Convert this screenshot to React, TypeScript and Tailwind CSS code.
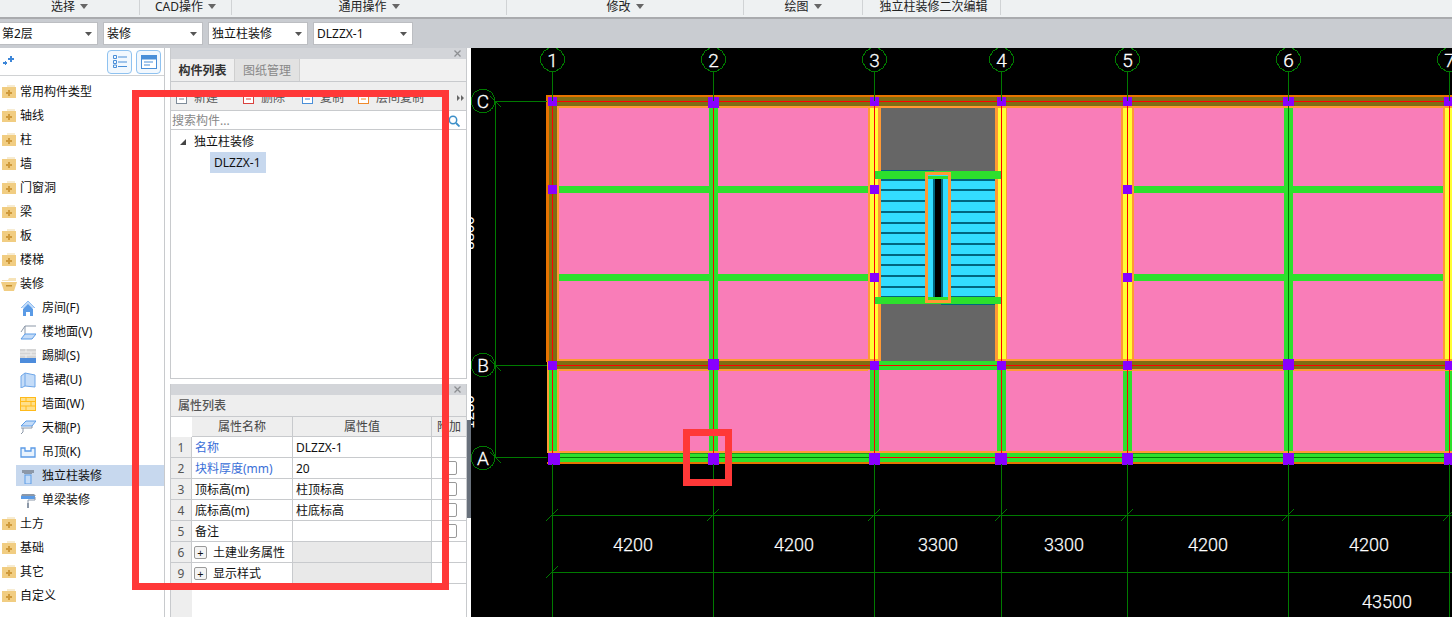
import React from "react";

const F = "font-['Noto_Sans','Noto_Sans_CJK_SC',sans-serif]";

function Folder({ open }: { open?: boolean }) {
  return (
    <svg width="16" height="14" viewBox="0 0 16 14" className="shrink-0">
      {open ? (
        <>
          <path d="M1 3h6l1-2h7v3H1z" fill="#f6e3b8" />
          <path d="M0 5h16l-3 9H3z" fill="#f1cd82" />
          <rect x="5" y="8" width="6" height="1.5" fill="#c58f2c" />
        </>
      ) : (
        <>
          <path d="M6 0h8v3H6z" fill="#f7ecd2" />
          <rect x="1" y="2" width="14" height="11" fill="#f1cd82" />
          <path d="M7 5h2v2h2v2H9v2H7V9H5V7h2z" fill="#cf9a3c" />
        </>
      )}
    </svg>
  );
}

function SubIcon({ k }: { k: number }) {
  const b = "#5b9be6";
  const l = "#c4dcf8";
  const g = "#8c98a8";
  const c: Record<number, React.ReactNode> = {
    0: (
      <>
        <path d="M1 8 8 1l7 7" fill={l} stroke="#8fbdf2" strokeWidth="1" />
        <path d="M3 9 8 4l5 5v7h-3v-4H6v4H3z" fill={b} />
      </>
    ),
    1: (
      <>
        <path d="M1 8 5 2h11M5 2v8" fill="none" stroke={g} strokeWidth="1" />
        <path d="M5 10h11l-4 5H1z" fill={l} stroke={b} strokeWidth="1" />
      </>
    ),
    2: (
      <>
        <rect x="0" y="1" width="16" height="9" fill="#d4d4d4" />
        <path d="M0 4h16M0 7h16M6 1v3M11 4v3M6 7v3" stroke="#f0f0f0" strokeWidth="1" />
        <rect x="0" y="10" width="16" height="5" fill="#4d8cdc" />
      </>
    ),
    3: (
      <>
        <path d="M1 4 5 1l10 2v12l-10-1-4 2z" fill={l} stroke="#6ea6e8" strokeWidth="1" />
        <path d="M5 1v13" stroke="#6ea6e8" strokeWidth="1" />
      </>
    ),
    4: (
      <>
        <rect x="0.5" y="1.5" width="15" height="13" fill="#ffe08a" stroke="#ffba1a" strokeWidth="1" />
        <path d="M0 5.5h16M0 10h16M6 1.500v4M11 5.500v4.500M6 10v4" stroke="#ffba1a" strokeWidth="1" />
      </>
    ),
    5: (
      <>
        <path d="M1 6 6 1h10l-4 5z" fill={l} stroke={b} strokeWidth="1" />
        <path d="M1 8h11M3 8v4M1 14l2-2M12 6v2" fill="none" stroke={g} strokeWidth="1" />
      </>
    ),
    6: (
      <path d="M1 4h4v3h6V4h4v9H1z" fill="#e8f2fd" stroke={b} strokeWidth="1.300" />
    ),
    7: (
      <>
        <path d="M2 2h12v3h-2v1H4V5H2z" fill={g} />
        <rect x="5" y="7" width="6" height="9" fill={l} stroke={b} strokeWidth="1" />
      </>
    ),
    8: (
      <>
        <path d="M2 2h12l2 2H1z" fill={g} />
        <rect x="1" y="4" width="14" height="3" fill={b} />
        <path d="M15 5v3H8v3" fill="none" stroke={g} strokeWidth="1" />
        <rect x="7" y="11" width="2" height="5" fill={g} />
      </>
    ),
  };
  return (
    <svg width="16" height="16" viewBox="0 0 16 16" className="shrink-0">
      {c[k]}
    </svg>
  );
}

const before = ["常用构件类型", "轴线", "柱", "墙", "门窗洞", "梁", "板", "楼梯"];
const subs = ["房间(F)", "楼地面(V)", "踢脚(S)", "墙裙(U)", "墙面(W)", "天棚(P)", "吊顶(K)", "独立柱装修", "单梁装修"];
const after = ["土方", "基础", "其它", "自定义"];

function LeftPanel() {
  const Row = ({ t, open }: { t: string; open?: boolean }) => (
    <div className="h-6 flex items-center gap-[3px] pl-[1px]">
      <Folder open={open} />
      <span>{t}</span>
    </div>
  );
  return (
    <div className="w-[165px] shrink-0 bg-white border-r border-[#c8cacd] text-[12px] text-[#111]">
      <div className="h-[28px] border-b border-[#d0d2d4] flex items-center pl-[2px] pr-[3px] justify-between">
        <svg width="13" height="13" viewBox="0 0 13 13">
          <path d="M8 1h2v2h2v2h-2v2H8V5H6V3h2zM1 7h2V6h1v1h1v2H4v1H3V9H1z" fill="#3d86d8" />
        </svg>
        <div className="flex gap-[4px]">
          <div className="w-[25px] h-[24px] rounded-[4px] border border-[#8fc2f0] bg-[#f2f8fe] flex items-center justify-center">
            <svg width="14" height="13" viewBox="0 0 14 13">
              <path d="M0.500 0.500h3v3h-3zM0.500 5.500h3v3h-3zM0.500 10h3v2.500h-3z" fill="none" stroke="#4a8fd8" />
              <path d="M5 2h9M5 7h9M5 11.500h9" stroke="#4a8fd8" />
            </svg>
          </div>
          <div className="w-[25px] h-[24px] rounded-[4px] border border-[#8fc2f0] bg-[#f2f8fe] flex items-center justify-center">
            <svg width="16" height="14" viewBox="0 0 16 14">
              <rect x="0.500" y="0.500" width="15" height="13" fill="#fff" stroke="#4a8fd8" />
              <rect x="0.500" y="0.500" width="15" height="4" fill="#4a8fd8" />
              <path d="M3 7h9M3 10h6" stroke="#4a8fd8" />
            </svg>
          </div>
        </div>
      </div>
      <div className="pt-[4px]">
        {before.map((t) => (
          <Row key={t} t={t} />
        ))}
        <Row t="装修" open />
        {subs.map((t, i) => (
          <div key={t} className={"ml-[16px] flex items-center gap-[6px] pl-[4px] " + (i === 7 ? "bg-[#c7d8ee] h-[21px] mt-[1px] mb-[2px]" : "h-6")}>
            <SubIcon k={i} />
            <span>{t}</span>
          </div>
        ))}
        {after.map((t) => (
          <Row key={t} t={t} />
        ))}
      </div>
    </div>
  );
}

function X() {
  return (
    <svg width="7" height="7" viewBox="0 0 7 7">
      <path d="M0.500 0.500l6 6M6.500 0.500l-6 6" stroke="#8d8f92" strokeWidth="1.300" />
    </svg>
  );
}

function TopPanel() {
  const tool = ["新建", "删除", "复制", "层间复制"];
  const colors = ["#7f8c9a", "#d9433f", "#4a8fd8", "#f08a2c"];
  const widths = ["w-[67px]", "w-[59px]", "w-[56px]", "w-auto"];
  return (
    <div className="h-[331px] flex flex-col border-x border-b border-[#c8cacd] bg-white">
      <div className="h-[11px] bg-[#d3d5d9] flex items-center justify-end pr-[5px]">
        <X />
      </div>
      <div className="h-[23px] flex border-b border-[#c8cacd] bg-[#f1f1f1] text-[12px]">
        <div className="w-[63px] pt-[1px] flex items-center justify-center font-bold text-[#333] bg-[#efefef]">构件列表</div>
        <div className="w-[66px] pt-[1px] flex items-center justify-center text-[#888] bg-[#e2e2e2] border-x border-[#cfcfcf]">图纸管理</div>
      </div>
      <div className="h-[29px] flex items-center bg-[#eeeeee] border-b border-[#c8cacd] pl-[5px] pt-[3px] text-[12px] text-[#555] relative">
        {tool.map((t, i) => (
          <div key={t} className={"flex items-center gap-[5px] " + widths[i]}>
            <svg width="13" height="13" viewBox="0 0 13 13">
              <rect x="0.500" y="0.500" width="10" height="12" fill="#fff" stroke={colors[i]} />
              <path d="M3 5h5M3 8h5" stroke={colors[i]} />
            </svg>
            <span>{t}</span>
          </div>
        ))}
        <svg width="7" height="6" viewBox="0 0 7 6" className="absolute right-[2px] top-[13px]">
          <path d="M0 0l3 3-3 3zM4 0l3 3-3 3z" fill="#666" />
        </svg>
      </div>
      <div className="h-[19px] flex items-center justify-between border-b border-[#c8cacd] pl-[1px] pr-[6px] pt-[1px] text-[12px] text-[#888]">
        <span>搜索构件...</span>
        <svg width="12" height="12" viewBox="0 0 12 12">
          <circle cx="5" cy="5" r="3.700" fill="none" stroke="#3c8fc8" strokeWidth="1.500" />
          <path d="M8 8l3.500 3.500" stroke="#3c8fc8" strokeWidth="1.800" />
        </svg>
      </div>
      <div className="text-[12px] text-[#111] pt-[2px]">
        <div className="h-[20px] flex items-center pl-[9px] gap-[8px]">
          <svg width="6" height="6" viewBox="0 0 6 6">
            <path d="M6 0v6H0z" fill="#444" />
          </svg>
          <span>独立柱装修</span>
        </div>
        <div className="ml-[39px] w-[56px] h-[21px] bg-[#c7d8ee] flex items-center pl-[4px]">DLZZX-1</div>
      </div>
    </div>
  );
}

const rows = [
  { n: 1, a: "名称", v: "DLZZX-1", blue: true, check: false },
  { n: 2, a: "块料厚度(mm)", v: "20", blue: true, check: true },
  { n: 3, a: "顶标高(m)", v: "柱顶标高", check: true },
  { n: 4, a: "底标高(m)", v: "柱底标高", check: true },
  { n: 5, a: "备注", v: "", check: true },
];

function PropPanel() {
  const line = "border-r border-b border-[#c8cacd] pt-[1px]";
  return (
    <div className="flex-1 flex flex-col border-x border-[#c8cacd] bg-white text-[12px] text-[#111]">
      <div className="h-[11px] bg-[#d3d5d9] flex items-center justify-end pr-[5px]">
        <X />
      </div>
      <div className="h-[22px] bg-[#eeeeee] border-b border-[#c8cacd] flex items-center pl-[7px] pt-[1px] text-[#555] font-medium">属性列表</div>
      <div className="flex-1 grid grid-cols-[21px_101px_139px_1fr] grid-rows-[20px_repeat(7,21px)_1fr]">
        <div className="bg-white" />
        <div className={"bg-[#eeeeee] flex items-center justify-center text-[#444] " + line}>属性名称</div>
        <div className={"bg-[#eeeeee] flex items-center justify-center text-[#444] " + line}>属性值</div>
        <div className="bg-[#eeeeee] border-b border-[#c8cacd] flex items-center justify-center text-[#444] pt-[1px]">附加</div>
        {rows.map((r) => (
          <React.Fragment key={r.n}>
            <div className={"bg-[#eeeeee] flex items-center justify-center text-[#555] " + line}>{r.n}</div>
            <div className={"flex items-center pl-[3px] " + line + (r.blue ? " text-[#3a6fd8]" : "")}>{r.a}</div>
            <div className={"flex items-center pl-[3px] " + line}>{r.v}</div>
            <div className="flex items-center justify-center border-b border-[#c8cacd] pl-[3px]">
              {r.check && <div className="w-[13px] h-[14px] rounded-[2px] border border-[#999] bg-white" />}
            </div>
          </React.Fragment>
        ))}
        {[
          [6, "土建业务属性"],
          [9, "显示样式"],
        ].map(([n, t]) => (
          <React.Fragment key={n}>
            <div className={"bg-[#eeeeee] flex items-center justify-center text-[#555] " + line}>{n}</div>
            <div className={"flex items-center pl-[2px] gap-[6px] " + line}>
              <span className="w-[13px] h-[13px] border border-[#999] rounded-[2px] flex items-center justify-center leading-none text-[11px] bg-[#f4f4f4]">+</span>
              <span>{t}</span>
            </div>
            <div className={"bg-[#e9e9e9] " + line} />
            <div className="border-b border-[#c8cacd]" />
          </React.Fragment>
        ))}
        <div className="bg-[#eeeeee]" />
      </div>
    </div>
  );
}

const AX = [552, 713, 874, 1001, 1127, 1288, 1449];
const PINK = "#f97db8";
const GREEN = "#2de02d";
const YEL = "#ffff33";
const LT = "#ff9933";
const OR = "#e67300";
const OL = "#7f6d12";
const PUR = "#8800ff";
const AXC = "#007a00";
const RED = "#ff0000";
const NUM = "Roboto, Liberation Sans, sans-serif";

function R({ x, y, x2, y2, c }: { x: number; y: number; x2: number; y2: number; c: string }) {
  return <rect x={x} y={y} width={x2 - x} height={y2 - y} fill={c} />;
}

function Bubble({ x, y, t }: { x: number; y: number; t: string }) {
  const pts = Array.from({ length: 12 }, (_, i) => {
    const a = (i * Math.PI) / 6 + Math.PI / 12;
    return `${(x + 12 * Math.cos(a)).toFixed(1)},${(y + 12 * Math.sin(a)).toFixed(1)}`;
  }).join(" ");
  return (
    <g>
      <polygon points={pts} fill="none" stroke={AXC} strokeWidth="1" shapeRendering="crispEdges" />
      <text x={x} y={y + 7} fontSize="19" fontWeight="300" fill="#fff" stroke="#fff" strokeWidth="0.3" textAnchor="middle" fontFamily={NUM}>
        {t}
      </text>
    </g>
  );
}

function Canvas() {
  const stair = [179, 189, 200, 211, 222, 232, 243, 254, 264, 275, 286, 296];
  const dims: [number, string][] = [
    [633, "4200"],
    [794, "4200"],
    [938, "3300"],
    [1064, "3300"],
    [1208, "4200"],
    [1369, "4200"],
  ];
  const pur: [number, number, number, number][] = [
    [548, 97, 557, 106],
    [708, 97, 719, 108],
    [870, 97, 879, 106],
    [997, 97, 1006, 106],
    [1123, 97, 1132, 106],
    [1283, 97, 1294, 106],
    [1444, 97, 1452, 106],
    [548, 185, 557, 194],
    [870, 185, 879, 194],
    [1123, 185, 1132, 194],
    [870, 273, 879, 282],
    [1123, 273, 1132, 282],
    [548, 361, 557, 370],
    [708, 359, 719, 370],
    [870, 361, 879, 370],
    [997, 361, 1006, 370],
    [1123, 361, 1132, 370],
    [1283, 359, 1294, 370],
    [1445, 361, 1452, 370],
    [548, 453, 560, 465],
    [708, 453, 719, 465],
    [869, 453, 880, 465],
    [995, 453, 1007, 465],
    [1122, 453, 1133, 465],
    [1283, 453, 1294, 465],
    [1444, 453, 1452, 465],
  ];
  return (
    <svg width="981" height="569" viewBox="471 48 981 569" className="block bg-black" shapeRendering="crispEdges">
      <R x={559} y={108} x2={1452} y2={451} c={PINK} />
      {/* stair well */}
      <R x={881} y={108} x2={995} y2={361} c="#666666" />
      <R x={881} y={179} x2={995} y2={297} c="#33ddff" />
      {stair.map((y) => (
        <g key={y}>
          <R x={881} y={y} x2={925} y2={y + 2} c="#006680" />
          <R x={951} y={y} x2={995} y2={y + 2} c="#006680" />
        </g>
      ))}
      <R x={881} y={170} x2={934} y2={171} c="#006680" />
      <R x={941} y={304} x2={995} y2={305} c="#006680" />
      {/* green horizontal beams */}
      {[186, 274].map((y) => (
        <g key={y}>
          <R x={557} y={y} x2={870} y2={y + 7} c={GREEN} />
          <R x={1130} y={y} x2={1452} y2={y + 7} c={GREEN} />
        </g>
      ))}
      {/* vertical green */}
      <R x={709} y={108} x2={718} y2={453} c={GREEN} />
      <R x={1284} y={108} x2={1293} y2={453} c={GREEN} />
      {/* yellow columns */}
      {[
        [868, 870, 878, 881],
        [995, 998, 1006, 1007],
        [1121, 1123, 1132, 1134],
        [1443, 1445, 1452, 1452],
      ].map(([a, b, c, d]) => (
        <g key={a}>
          <R x={a} y={108} x2={d} y2={359} c={LT} />
          <R x={b} y={108} x2={c} y2={359} c={YEL} />
        </g>
      ))}
      {/* stair landings over the columns */}
      <R x={875} y={171} x2={1001} y2={179} c={GREEN} />
      <R x={875} y={297} x2={1001} y2={304} c={GREEN} />
      <R x={925} y={172} x2={951} y2={303} c={LT} />
      <R x={928} y={175} x2={948} y2={300} c="#33ddff" />
      <R x={928} y={176} x2={948} y2={179} c={GREEN} />
      <R x={928} y={297} x2={948} y2={300} c={GREEN} />
      <R x={933} y={179} x2={943} y2={297} c="#006680" />
      <R x={935} y={179} x2={941} y2={297} c="#000" />
      {/* green columns below B */}
      {[
        [870, 879],
        [997, 1006],
        [1123, 1132],
        [1445, 1452],
      ].map(([a, b]) => (
        <R key={a} x={a} y={370} x2={b} y2={453} c={GREEN} />
      ))}
      {/* top band */}
      <R x={546} y={95} x2={1452} y2={97} c={OR} />
      <R x={549} y={97} x2={1452} y2={106} c={OL} />
      <R x={557} y={106} x2={1452} y2={108} c={LT} />
      {/* left band */}
      <R x={546} y={95} x2={549} y2={362} c={OR} />
      <R x={549} y={97} x2={557} y2={361} c={OL} />
      <R x={557} y={108} x2={559} y2={359} c={LT} />
      <R x={547} y={362} x2={549} y2={453} c={LT} />
      <R x={549} y={370} x2={557} y2={453} c={GREEN} />
      <R x={557} y={371} x2={559} y2={453} c={LT} />
      {/* B band */}
      <R x={557} y={359} x2={1452} y2={371} c={LT} />
      <R x={549} y={361} x2={1452} y2={369} c={OL} />
      <R x={881} y={359} x2={995} y2={361} c="#666666" />
      <R x={870} y={361} x2={1006} y2={370} c={GREEN} />
      <R x={868} y={370} x2={1007} y2={371} c={PINK} />
      <R x={870} y={370} x2={879} y2={371} c={GREEN} />
      <R x={997} y={370} x2={1006} y2={371} c={GREEN} />
      <R x={709} y={370} x2={718} y2={371} c={GREEN} />
      <R x={1284} y={370} x2={1293} y2={371} c={GREEN} />
      {/* A band */}
      <R x={547} y={451} x2={1452} y2={453} c={LT} />
      <R x={549} y={453} x2={1452} y2={462} c={GREEN} />
      <R x={549} y={453} x2={874} y2={454} c="#1a9a1a" />
      <R x={1127} y={453} x2={1452} y2={454} c="#1a9a1a" />
      <R x={547} y={462} x2={1452} y2={464} c={OR} />
      {/* red axes */}
      <R x={552} y={101} x2={553} y2={457} c={RED} />
      <R x={713} y={101} x2={714} y2={457} c={RED} />
      <R x={874} y={101} x2={875} y2={457} c={RED} />
      <R x={1001} y={101} x2={1002} y2={457} c={RED} />
      <R x={1127} y={101} x2={1128} y2={457} c={RED} />
      <R x={1449} y={101} x2={1450} y2={457} c={RED} />
      <R x={1288} y={71} x2={1289} y2={457} c={AXC} />
      <R x={552} y={101} x2={1452} y2={102} c={RED} />
      <R x={552} y={365} x2={1452} y2={366} c={RED} />
      <R x={552} y={457} x2={874} y2={458} c={AXC} />
      <R x={874} y={457} x2={1127} y2={458} c={RED} />
      <R x={1127} y={457} x2={1452} y2={458} c={AXC} />
      {pur.map(([a, b, c, d]) => (
        <R key={`${a}-${b}`} x={a} y={b} x2={c} y2={d} c={PUR} />
      ))}
      {/* dark-green axis parts */}
      {AX.map((x) => (
        <g key={x}>
          <R x={x} y={71} x2={x + 1} y2={101} c={AXC} />
          <R x={x} y={464} x2={x + 1} y2={617} c={AXC} />
          <path d={`M${x - 6} 521L${x + 6} 509`} stroke={AXC} strokeWidth="1" shapeRendering="auto" />
        </g>
      ))}
      <path d="M546 578L558 566" stroke={AXC} strokeWidth="1" shapeRendering="auto" />
      <R x={495} y={101} x2={496} y2={457} c={AXC} />
      {[101, 365, 457].map((y) => (
        <g key={y}>
          <R x={495} y={y} x2={547} y2={y + 1} c={AXC} />
          <path d={`M490 ${y - 5}L501 ${y + 6}`} stroke={AXC} strokeWidth="1" shapeRendering="auto" />
        </g>
      ))}
      <R x={552} y={515} x2={1452} y2={516} c={AXC} />
      <R x={552} y={572} x2={1452} y2={573} c={AXC} />
      <g shapeRendering="auto">
        {AX.map((x, i) => (
          <Bubble key={x} x={x + 0.5} y={59.5} t={String(i + 1)} />
        ))}
        <Bubble x={483} y={101} t="C" />
        <Bubble x={483} y={365} t="B" />
        <Bubble x={483} y={458} t="A" />
        {dims.map(([x, t], i) => (
          <text key={i} x={x} y={551} fontSize="18" fontWeight="300" fill="#fff" stroke="#fff" strokeWidth="0.25" textAnchor="middle" fontFamily={NUM}>
            {t}
          </text>
        ))}
        <text x={1387} y={608} fontSize="18" fontWeight="300" fill="#fff" stroke="#fff" strokeWidth="0.25" textAnchor="middle" fontFamily={NUM}>
          43500
        </text>
        <text transform="translate(474 233) rotate(-90)" fontSize="15" fill="#fff" textAnchor="middle" fontFamily="Liberation Sans, sans-serif">
          8800
        </text>
        <text transform="translate(474 412) rotate(-90)" fontSize="15" fill="#fff" textAnchor="middle" fontFamily="Liberation Sans, sans-serif">
          1280
        </text>
      </g>
    </svg>
  );
}

function Select({ t, w }: { t: string; w: string }) {
  return (
    <div className={"h-[23px] bg-white border border-[#bcbec2] flex items-center justify-between pl-[3px] pr-[5px] text-[12px] text-[#111] " + w}>
      <span>{t}</span>
      <svg width="7" height="4" viewBox="0 0 7 4">
        <path d="M0 0h7L3.500 4z" fill="#555" />
      </svg>
    </div>
  );
}

const menus = [
  { w: "w-[140px]", t: "选择", c: true },
  { w: "w-[92px]", t: "CAD操作", c: true },
  { w: "w-[275px]", t: "通用操作", c: true },
  { w: "w-[237px]", t: "修改", c: true },
  { w: "w-[119px]", t: "绘图", c: true },
  { w: "w-[138px] pl-[4px]", t: "独立柱装修二次编辑", c: false },
];

export default function App() {
  return (
    <div className={"relative w-[1452px] h-[617px] overflow-hidden bg-[#c9ccd1] " + F}>
      <div className="h-[19px] bg-[#eef1f2] border-b-2 border-[#a9abae] flex text-[12px] text-[#222]">
        {menus.map((m) => (
          <div key={m.t} className={"h-[15px] border-r border-[#d0d3d5] flex items-start justify-center gap-[5px] leading-[14px] " + m.w}>
            <span>{m.t}</span>
            {m.c && (
              <svg width="8" height="5" viewBox="0 0 8 5" className="mt-[4px]">
                <path d="M0 0h8L4 5z" fill="#666" />
              </svg>
            )}
          </div>
        ))}
      </div>
      <div className="h-[29px] flex items-start gap-[5px] pt-[3px]">
        <Select t="第2层" w="w-[100px] ml-[-2px]" />
        <Select t="装修" w="w-[100px]" />
        <Select t="独立柱装修" w="w-[100px]" />
        <Select t="DLZZX-1" w="w-[100px]" />
      </div>
      <div className="h-[569px] flex">
        <LeftPanel />
        <div className="w-[5px] shrink-0 bg-white" />
        <div className="w-[297px] shrink-0 flex flex-col gap-[5px] bg-white">
          <TopPanel />
          <PropPanel />
        </div>
        <div className="w-[4px] shrink-0 flex flex-col bg-white">
          <div className="h-[372px]" />
          <div className="h-[98px] bg-[#69717c]" />
        </div>
        <Canvas />
      </div>
      <div className="absolute left-[132px] top-[90px] w-[317px] h-[500px] border-[7px] border-[#ff3838]" />
      <div className="absolute left-[683px] top-[429px] w-[49px] h-[57px] border-[7px] border-[#ff3838]" />
    </div>
  );
}
